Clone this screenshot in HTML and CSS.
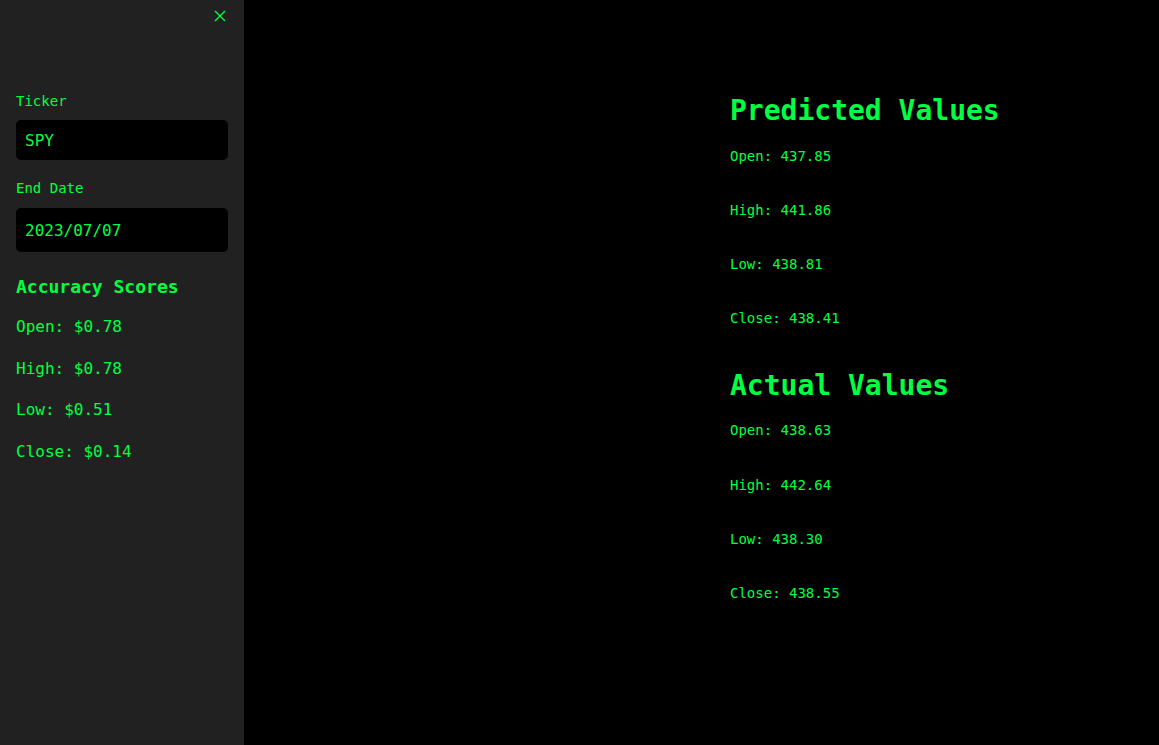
FILE: index.html
```html
<!DOCTYPE html>
<html lang="en">
<head>
<meta charset="utf-8">
<title>Stock Predictor</title>
<link rel="stylesheet" href="styles.css">
</head>
<body>
<div class="app">
  <aside class="sidebar">
    <div class="sidebar-top">
      <button class="close-btn" aria-label="Close sidebar">
        <svg width="12" height="12" viewBox="0 0 12 12"><path d="M1 1L11 11M11 1L1 11" stroke="#00ff41" stroke-width="1.4" fill="none"/></svg>
      </button>
    </div>
    <label class="field-label" for="ticker">Ticker</label>
    <input class="field-input" id="ticker" type="text" value="SPY">
    <label class="field-label second" for="enddate">End Date</label>
    <input class="field-input tall" id="enddate" type="text" value="2023/07/07">
    <h3 class="acc-title">Accuracy Scores</h3>
    <ul class="acc-list">
      <li>Open: $0.78</li>
      <li>High: $0.78</li>
      <li>Low: $0.51</li>
      <li>Close: $0.14</li>
    </ul>
  </aside>
  <main class="main">
    <div class="chart-area"></div>
    <section class="values">
      <h2 class="values-title">Predicted Values</h2>
      <ul class="values-list">
        <li>Open: 437.85</li>
        <li>High: 441.86</li>
        <li>Low: 438.81</li>
        <li>Close: 438.41</li>
      </ul>
      <h2 class="values-title actual">Actual Values</h2>
      <ul class="values-list">
        <li>Open: 438.63</li>
        <li>High: 442.64</li>
        <li>Low: 438.30</li>
        <li>Close: 438.55</li>
      </ul>
    </section>
  </main>
</div>
</body>
</html>
```
FILE: styles.css
```css
* { box-sizing: border-box; }
html, body {
  margin: 0;
  height: 100%;
  background: #000;
  color: #00ff41;
  font-family: "DejaVu Sans Mono", "Liberation Mono", monospace;
}
.app {
  display: flex;
  height: 745px;
}
.sidebar {
  width: 244px;
  flex: none;
  background: #212121;
  padding: 0 16px;
  display: flex;
  flex-direction: column;
}
.sidebar-top {
  height: 31px;
  display: flex;
  justify-content: flex-end;
  align-items: center;
  margin-right: -2px;
}
.close-btn {
  background: none;
  border: 0;
  padding: 0;
  width: 20px;
  height: 20px;
  display: flex;
  align-items: center;
  justify-content: center;
  cursor: pointer;
}
.field-label {
  font-size: 14px;
  line-height: 20px;
  margin-top: 60px;
}
.field-label.second { margin-top: 18px; }
.field-input {
  margin-top: 9px;
  height: 40px;
  width: 212px;
  background: #000;
  border: 0;
  border-radius: 5px;
  color: #00ff41;
  font-family: inherit;
  font-size: 16px;
  padding: 0 9px;
  outline: none;
}
.field-input.tall { height: 44px; margin-top: 10px; }
.acc-title {
  margin: 23px 0 0;
  font-size: 18px;
  line-height: 24px;
  font-weight: bold;
}
.acc-list {
  list-style: none;
  margin: 17px 0 0;
  padding: 0;
  display: flex;
  flex-direction: column;
  gap: 19.67px;
}
.acc-list li {
  font-size: 16px;
  line-height: 22px;
}
.main {
  flex: 1;
  display: grid;
  grid-template-columns: 486px 1fr;
}
.values {
  padding-top: 94px;
}
.values-title {
  margin: 0;
  font-size: 28px;
  line-height: 34px;
  font-weight: bold;
}
.values-title.actual { margin-top: 39.5px; }
.values-list {
  list-style: none;
  margin: 17.5px 0 0;
  padding: 0;
  display: flex;
  flex-direction: column;
  gap: 33.33px;
}
.values-list li {
  font-size: 14px;
  line-height: 21px;
}
```
